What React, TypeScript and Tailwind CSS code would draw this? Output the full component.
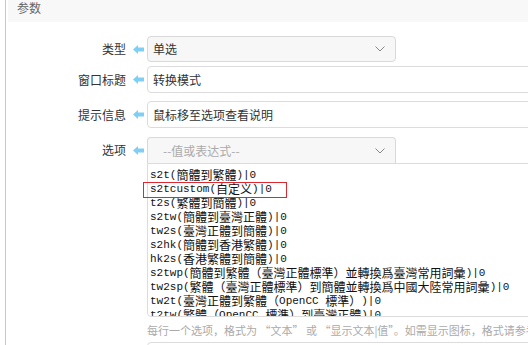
import React from "react";

const options = [
  "s2t(簡體到繁體)|0",
  "s2tcustom(自定义)|0",
  "t2s(繁體到簡體)|0",
  "s2tw(簡體到臺灣正體)|0",
  "tw2s(臺灣正體到簡體)|0",
  "s2hk(簡體到香港繁體)|0",
  "hk2s(香港繁體到簡體)|0",
  "s2twp(簡體到繁體（臺灣正體標準）並轉換爲臺灣常用詞彙)|0",
  "tw2sp(繁體（臺灣正體標準）到簡體並轉換爲中國大陸常用詞彙)|0",
  "tw2t(臺灣正體到繁體（OpenCC 標準）)|0",
  "t2tw(繁體（OpenCC 標準）到臺灣正體)|0",
];

// split a line into latin / CJK runs so the CJK glyphs get their own size
function splitRuns(line: string) {
  const runs: { cjk: boolean; text: string }[] = [];
  for (const ch of line) {
    const cjk = /[\u3000-\u9fff\uff00-\uffef]/.test(ch);
    const last = runs[runs.length - 1];
    if (last && last.cjk === cjk) last.text += ch;
    else runs.push({ cjk, text: ch });
  }
  return runs;
}

function Arrow() {
  return (
    <svg width="11" height="9" viewBox="0 0 11 9" className="shrink-0">
      <polygon points="0,4.5 5,0 5,2.5 11,2.5 11,6.5 5,6.5 5,9" fill="#7fcff5" />
    </svg>
  );
}

function Chevron() {
  return (
    <svg width="10" height="6" viewBox="0 0 10 6" className="shrink-0">
      <polyline points="0.5,0.5 5,5 9.5,0.5" fill="none" stroke="#888" strokeWidth="1" />
    </svg>
  );
}

function Label({ text }: { text: string }) {
  return (
    <div className="flex items-center shrink-0">
      <span className="w-[118px] text-right text-[12px] text-[#333]">{text}</span>
      <span className="ml-[7px] mr-[3px] flex">
        <Arrow />
      </span>
    </div>
  );
}

export default function App() {
  return (
    <div
      className="w-[528px] h-[345px] overflow-hidden bg-white"
      style={{ fontFamily: '"Noto Sans CJK SC", "Noto Sans", sans-serif' }}
    >
      <div className="ml-[5px] h-full border-l border-[#a9cff3] pl-[2px]">
        <div className="h-[22px] bg-[#f8f8f8] pl-[9px] pt-[1px] text-[12px] leading-[14px] text-[#666]">参数</div>

        <div className="mt-[14px] flex items-center h-[26px]">
          <Label text="类型" />
          <div className="w-[249px] h-[26px] rounded-[4px] border border-[#d9d9d9] bg-[#f7f7f7] flex items-center justify-between pl-[5px] pr-[10px] text-[12px] text-[#333]">
            <span>单选</span>
            <Chevron />
          </div>
        </div>

        <div className="mt-[4px] flex items-center h-[27px]">
          <Label text="窗口标题" />
          <div className="w-[420px] shrink-0 h-[27px] rounded-l-[4px] border border-[#dcdcdc] bg-white flex items-center pl-[5px] text-[12px] text-[#333]">
            转换模式
          </div>
        </div>

        <div className="mt-[8px] flex items-center h-[27px]">
          <Label text="提示信息" />
          <div className="w-[420px] shrink-0 h-[27px] rounded-l-[4px] border border-[#dcdcdc] bg-white flex items-center pl-[5px] text-[12px] text-[#333]">
            鼠标移至选项查看说明
          </div>
        </div>

        <div className="mt-[9px] flex items-start">
          <div className="h-[26px] flex items-center">
            <Label text="选项" />
          </div>
          <div className="shrink-0 w-[420px]">
            <div className="w-[249px] h-[26px] rounded-t-[4px] border border-b-0 border-[#d9d9d9] bg-[#f7f7f7] flex items-center justify-between pl-[15px] pr-[10px] text-[12px] text-[#aaa]">
              <span>--值或表达式--</span>
              <Chevron />
            </div>
            <div className="relative h-[154px] rounded-b-[4px] border border-[#dcdcdc] bg-white">
              <div
                className="h-full overflow-hidden pl-[2px] pt-[4px] text-[11px] leading-[14px] text-[#111] whitespace-nowrap"
                style={{ fontFamily: '"Liberation Mono", "Noto Sans CJK SC", monospace' }}
              >
                {options.map((line) => (
                  <div key={line} className="h-[14px] flex items-center">
                    {splitRuns(line).map((r, i) =>
                      r.cjk ? (
                        <span key={i} className="text-[12px] leading-[14px]" style={{ fontFamily: '"Noto Sans CJK SC", sans-serif' }}>
                          {r.text}
                        </span>
                      ) : (
                        <span key={i} className="leading-[14px] whitespace-pre">{r.text}</span>
                      )
                    )}
                  </div>
                ))}
              </div>
              <div className="absolute left-[-5px] top-[18px] w-[144px] h-[16px] border border-[#e0282e]" />
            </div>
          </div>
        </div>

        <div className="mt-[5px] pl-[139px] text-[11px] leading-[16px] text-[#aaa] whitespace-nowrap">
          每行一个选项，格式为 “文本” 或 “显示文本|值”。如需显示图标，格式请参考
        </div>
        <div className="mt-[4px] ml-[139px] w-[420px] h-[27px] rounded-l-[4px] border border-[#dcdcdc]" />
      </div>
    </div>
  );
}
